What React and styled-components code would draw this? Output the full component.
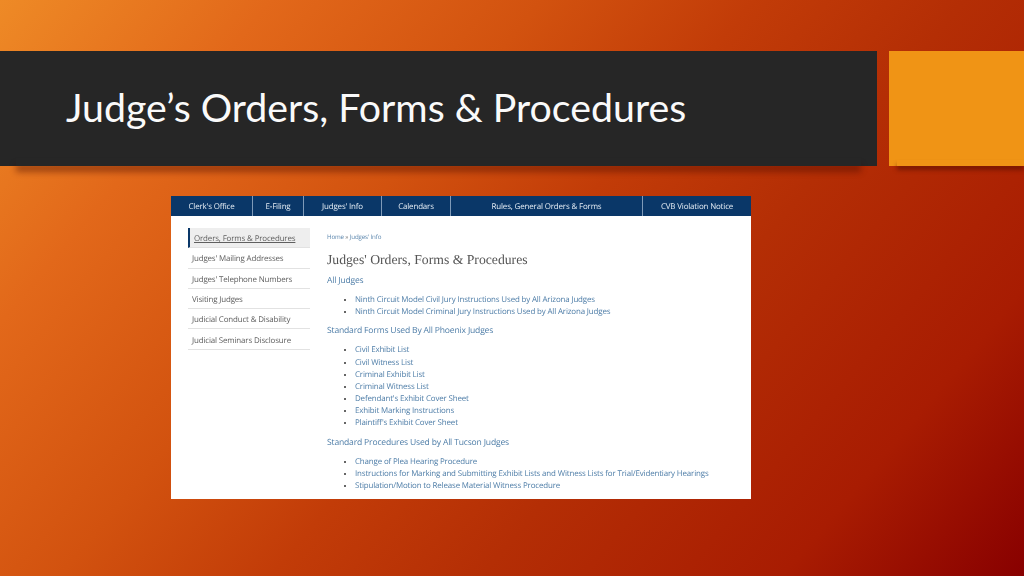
import React from "react";
import styled, { createGlobalStyle } from "styled-components";

const Global = createGlobalStyle`
  html, body { margin: 0; padding: 0; width: 1024px; height: 576px; overflow: hidden; }
`;

const Slide = styled.div`
  width: 1024px;
  height: 576px;
  overflow: hidden;
  background: linear-gradient(130deg, #ee8a26 0%, #e2681a 18%, #d2520f 36%, #c23c08 50%, #b42e05 64%, #a81c02 84%, #880000 100%);
  padding-top: 51px;
  box-sizing: border-box;
`;

const Header = styled.header`
  display: flex;
  gap: 12px;
  height: 115px;
`;

const TitleBar = styled.div`
  position: relative;
  box-sizing: border-box;
  width: 877px;
  background: #262626;
  padding-left: 66px;
  display: flex;
  align-items: center;
  &::after {
    content: "";
    position: absolute;
    left: 16px;
    right: 16px;
    bottom: 0;
    height: 8px;
    box-shadow: 0 6px 6px rgba(70, 10, 0, 0.45);
  }
`;

const Title = styled.h1`
  margin: 0 0 5px;
  font: 400 39.3px "Lato", sans-serif;
  color: #fafafa;
  white-space: nowrap;
`;

const Accent = styled.div`
  position: relative;
  width: 135px;
  background: #f09415;
  &::after {
    content: "";
    position: absolute;
    left: 8px;
    right: 0;
    bottom: 0;
    height: 6px;
    box-shadow: 0 4px 4px rgba(70, 10, 0, 0.5);
  }
`;

const Shot = styled.section`
  width: 580px;
  height: 303px;
  margin: 30px 0 0 171px;
  background: #fff;
  font-family: "Open Sans", sans-serif;
  font-size: 7.95px;
  letter-spacing: -0.15px;
  text-rendering: geometricPrecision;
  filter: blur(0.4px);
`;

const Nav = styled.nav`
  display: grid;
  grid-template-columns: 82px 51px 78px 69px 192px 108px;
  height: 20px;
  background: #0a3768;
`;

const NavItem = styled.div`
  display: flex;
  align-items: center;
  justify-content: center;
  padding-top: 1px;
  color: #e4ecf4;
  white-space: nowrap;
  box-sizing: border-box;
  border-right: 1px solid #7f9ab8;
  &:last-child { border-right: 0; }
`;

const Body = styled.div`
  display: flex;
  padding: 12px 0 0 17px;
`;

const Side = styled.aside`
  width: 122px;
  margin-right: 17px;
  flex: none;
`;

const SideItem = styled.div`
  height: 20.3px;
  box-sizing: border-box;
  display: flex;
  align-items: center;
  color: #5f5f5f;
  white-space: nowrap;
  padding: 3px 0 0 4px;
  background: ${(p) => (p.$active ? "#eeeeee" : "transparent")};
  border-bottom: 1px solid #e2e2e2;
  border-left: ${(p) => (p.$active ? "2px solid #0a3768" : "0")};
  text-decoration: ${(p) => (p.$active ? "underline" : "none")};
`;

const Main = styled.main`
  flex: 1;
  min-width: 0;
`;

const Crumb = styled.div`
  font-size: 6.2px;
  line-height: 10px;
  margin-top: 4px;
  color: #5b86ad;
  span { color: #888; }
`;

const Heading = styled.h2`
  margin: 10px 0 0;
  font: 400 13.7px/16px "Liberation Serif", serif;
  letter-spacing: 0;
  color: #555;
  white-space: nowrap;
`;

const Section = styled.h3`
  margin: 5px 0 0;
  font: 400 8.55px/14px "Open Sans", sans-serif;
  letter-spacing: -0.17px;
  color: #4f7ea8;
  white-space: nowrap;
`;

const List = styled.ul`
  margin: 7px 0 0;
  padding: 0 0 0 28px;
  list-style: disc;
  color: #333;
  li { line-height: 12.17px; white-space: nowrap; }
  a { color: #4f7ea8; }
`;

const nav = ["Clerk's Office", "E-Filing", "Judges' Info", "Calendars", "Rules, General Orders & Forms", "CVB Violation Notice"];
const side = ["Orders, Forms & Procedures", "Judges' Mailing Addresses", "Judges' Telephone Numbers", "Visiting Judges", "Judicial Conduct & Disability", "Judicial Seminars Disclosure"];
const groups = [
  ["All Judges", ["Ninth Circuit Model Civil Jury Instructions Used by All Arizona Judges", "Ninth Circuit Model Criminal Jury Instructions Used by All Arizona Judges"]],
  ["Standard Forms Used By All Phoenix Judges", ["Civil Exhibit List", "Civil Witness List", "Criminal Exhibit List", "Criminal Witness List", "Defendant's Exhibit Cover Sheet", "Exhibit Marking Instructions", "Plaintiff's Exhibit Cover Sheet"]],
  ["Standard Procedures Used by All Tucson Judges", ["Change of Plea Hearing Procedure", "Instructions for Marking and Submitting Exhibit Lists and Witness Lists for Trial/Evidentiary Hearings", "Stipulation/Motion to Release Material Witness Procedure"]],
];

export default function App() {
  return (
    <Slide>
      <Global />
      <Header>
        <TitleBar><Title>Judge’s Orders, Forms &amp; Procedures</Title></TitleBar>
        <Accent />
      </Header>
      <Shot>
        <Nav>{nav.map((n) => <NavItem key={n}>{n}</NavItem>)}</Nav>
        <Body>
          <Side>{side.map((s, i) => <SideItem key={s} $active={i === 0}>{s}</SideItem>)}</Side>
          <Main>
            <Crumb>Home <span>»</span> Judges' Info</Crumb>
            <Heading>Judges' Orders, Forms &amp; Procedures</Heading>
            {groups.map(([g, items]) => (
              <div key={g}>
                <Section>{g}</Section>
                <List>{items.map((t) => <li key={t}><a>{t}</a></li>)}</List>
              </div>
            ))}
          </Main>
        </Body>
      </Shot>
    </Slide>
  );
}
